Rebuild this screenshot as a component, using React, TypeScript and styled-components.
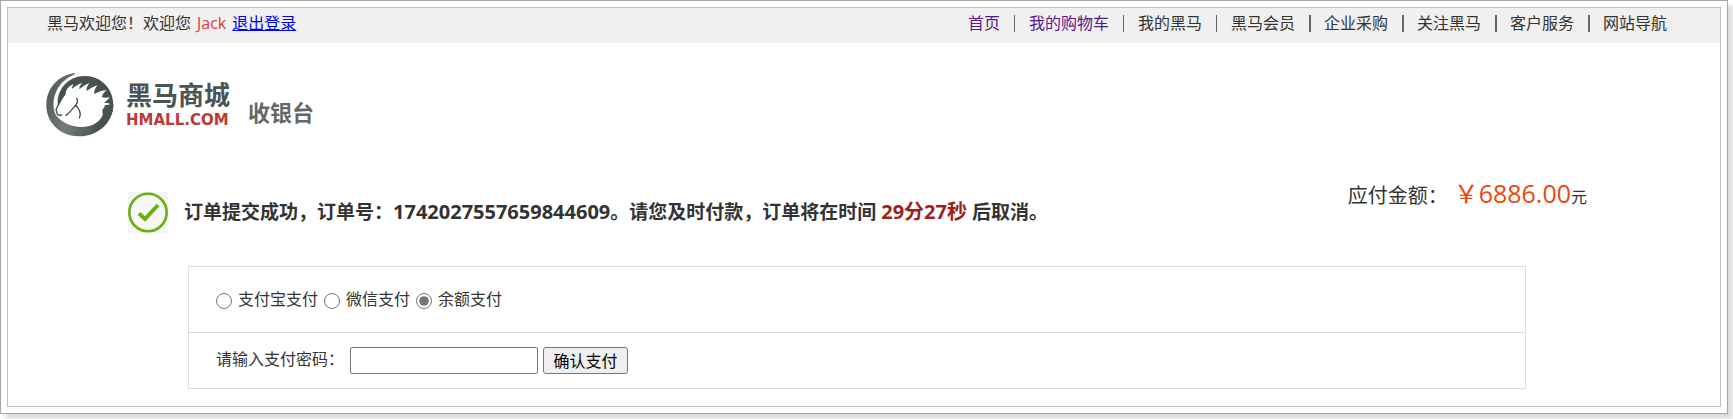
import React from "react";
import styled, { createGlobalStyle } from "styled-components";

const GlobalStyle = createGlobalStyle`
  *, *::before, *::after { box-sizing: border-box; }
  body {
    margin: 0;
    background: #fff;
    color: #333;
    font: 16px/24px "Open Sans", "Noto Sans CJK SC", sans-serif;
  }
`;

const Frame = styled.div`
  margin: 0 5px 5px 0;
  padding: 6px;
  border: 1px solid #a6a6a6;
  background: #fff;
  box-shadow: 5px 5px 4px #ddd;
`;

const Page = styled.div`
  border: 1px solid #bfbfbf;
  padding-bottom: 17px;
`;

const TopBar = styled.header`
  display: flex;
  justify-content: space-between;
  height: 35px;
  padding: 3px 53px 0 39px;
  background: #f0f0f0;
`;

const Greeting = styled.div`
  display: flex;
  gap: 6px;
  white-space: nowrap;
`;

const UserName = styled.span`
  color: #e4393c;
`;

const LogoutLink = styled.a`
  color: #00e;
`;

const NavList = styled.ul`
  display: flex;
  margin: 0;
  padding: 0;
  list-style: none;
`;

const NavItem = styled.li<{ $bar: number }>`
  display: flex;
  align-items: center;
  height: 24px;
  white-space: nowrap;

  &:not(:first-child)::before {
    content: "";
    width: ${(p) => p.$bar}px;
    height: 17px;
    margin: 0 ${(p) => 15 - p.$bar}px 0 14px;
    background: #666;
  }
`;

const NavLink = styled.a<{ $visited?: boolean }>`
  color: ${(p) => (p.$visited ? "#551a8b" : "#333")};
  text-decoration: none;
`;

const Brand = styled.div`
  display: flex;
  align-items: flex-start;
  padding: 29px 38px 0;
`;

const HorseMark = styled.svg`
  width: 68px;
  height: 65px;
`;

const BrandText = styled.div`
  display: flex;
  flex-direction: column;
  margin: 7px 0 0 12px;
`;

const BrandName = styled.span`
  color: #4b5452;
  font-size: 26px;
  font-weight: 700;
  line-height: 32px;
`;

const BrandDomain = styled.span`
  color: #bb3a36;
  font: 700 15px/18px "DejaVu Sans", sans-serif;
`;

const PageTitle = styled.h1`
  margin: 24px 0 0 18px;
  color: #666;
  font-size: 22px;
  line-height: 32px;
`;

const OrderRow = styled.section`
  display: flex;
  justify-content: space-between;
  padding: 38px 133px 0 120px;
`;

const OrderStatus = styled.div`
  display: flex;
  align-items: center;
  gap: 16px;
  margin-top: 17px;
`;

const CheckIcon = styled.svg`
  width: 40px;
  height: 41px;
  background: #f5f5f5;
`;

const OrderText = styled.h2`
  margin: 0;
  padding-bottom: 2px;
  font-size: 19px;
  line-height: 28px;
`;

const OrderNumber = styled.span`
  font-size: 20px;
`;

const Countdown = styled.span`
  color: #9e1f1a;
  font-size: 20px;
`;

const Amount = styled.div`
  display: flex;
  align-items: baseline;
  align-self: flex-start;
  line-height: 36px;
`;

const AmountLabel = styled.span`
  margin-right: 6px;
  font-size: 20px;
`;

const Price = styled.span`
  color: #e9480f;
  font-size: 25px;
`;

const PayPanel = styled.form`
  margin: 33px 194px 0 180px;
  border: 1px solid #ddd;
`;

const Methods = styled.div`
  display: flex;
  align-items: center;
  gap: 6px;
  height: 65px;
  padding: 0 27px 2px;
`;

const Method = styled.label`
  display: flex;
  align-items: center;
  gap: 6px;
`;

const Radio = styled.input`
  width: 16px;
  height: 16px;
  margin: 4px 0 0;
  filter: grayscale(1);
  accent-color: #767676;
`;

const PasswordRow = styled.div`
  display: flex;
  align-items: center;
  gap: 5px;
  height: 56px;
  padding: 0 27px;
  border-top: 1px solid #ddd;
`;

const PasswordLabel = styled.label`
  width: 129px;
  padding-bottom: 4px;
`;

const PasswordInput = styled.input`
  width: 188px;
  height: 27px;
  border: 1px solid #767676;
  border-radius: 2px;
`;

const PayButton = styled.button`
  width: 85px;
  height: 27px;
  padding: 0;
  border: 1px solid #767676;
  border-radius: 3px;
  background: #efefef;
  color: #000;
  font: inherit;
`;

const navItems = [
  { text: "首页", visited: true, bar: 1 },
  { text: "我的购物车", visited: true, bar: 1 },
  { text: "我的黑马", bar: 1 },
  { text: "黑马会员", bar: 1 },
  { text: "企业采购", bar: 2 },
  { text: "关注黑马", bar: 2 },
  { text: "客户服务", bar: 2 },
  { text: "网站导航", bar: 2 },
];

const methods = ["支付宝支付", "微信支付", "余额支付"];

function Horse() {
  return (
    <HorseMark viewBox="20 20 204 195" aria-hidden="true">
      <defs>
        <linearGradient id="ring" x1="0" y1="0" x2="1" y2="0.3">
          <stop offset="0" stopColor="#4c5554" />
          <stop offset="0.5" stopColor="#737b7c" />
          <stop offset="1" stopColor="#454d4c" />
        </linearGradient>
      </defs>
      <path
        fill="url(#ring)"
        d="M107 23C57 29 21 68 21 120C21 174 65 213 119 213C176 213 222 172 222 116L196 120C198 157 170 185 128 185C91 185 65 169 50 150C32 113 46 51 107 27Z"
      />
      <path
        fill="#465150"
        d="M55 112C55 78 79 34 135 32C183 31 222 68 222 119C222 145 208 170 187 184C193 164 190 147 189 135C193 125 202 120 214 117C207 113 201 112 194 112C200 107 206 104 211 96C202 98 195 98 187 95C191 86 195 80 202 75C188 75 178 80 165 86C163 79 167 70 174 60C161 64 151 71 142 77C140 69 145 60 151 53C138 57 129 64 120 72C119 65 123 59 129 52C116 57 107 63 98 70C97 66 100 62 103 57C85 63 80 74 78 88C70 97 61 112 55 122Z"
      />
      <path
        fill="none"
        stroke="#465150"
        strokeWidth="4"
        strokeLinecap="round"
        strokeLinejoin="round"
        d="M77 85Q70 94 62 110L50 132L54 147L62 151L67 148M80 150Q88 145 95 136L112 116Q117 106 112 99M109 119C121 132 127 144 120 158"
      />
    </HorseMark>
  );
}

export default function App() {
  return (
    <>
      <GlobalStyle />
      <Frame>
        <Page>
          <TopBar>
            <Greeting>
              <span>黑马欢迎您！欢迎您</span>
              <UserName>Jack</UserName>
              <LogoutLink href="#logout">退出登录</LogoutLink>
            </Greeting>
            <nav>
              <NavList>
                {navItems.map((item) => (
                  <NavItem key={item.text} $bar={item.bar}>
                    <NavLink href="#nav" $visited={item.visited}>
                      {item.text}
                    </NavLink>
                  </NavItem>
                ))}
              </NavList>
            </nav>
          </TopBar>
          <Brand>
            <Horse />
            <BrandText>
              <BrandName>黑马商城</BrandName>
              <BrandDomain>HMALL.COM</BrandDomain>
            </BrandText>
            <PageTitle>收银台</PageTitle>
          </Brand>
          <OrderRow>
            <OrderStatus>
              <CheckIcon viewBox="0 0 40 41" aria-hidden="true">
                <circle cx="20" cy="20.5" r="18.7" fill="#f7f7f7" stroke="#6bb012" strokeWidth="2.6" />
                <path d="M11 21.5L17 27L30 13" fill="none" stroke="#6bb012" strokeWidth="4" />
              </CheckIcon>
              <OrderText>
                订单提交成功，订单号：<OrderNumber>1742027557659844609</OrderNumber>
                。请您及时付款，订单将在时间 <Countdown>29分27秒</Countdown> 后取消。
              </OrderText>
            </OrderStatus>
            <Amount>
              <AmountLabel>应付金额：</AmountLabel>
              <Price>￥6886.00</Price>
              <span>元</span>
            </Amount>
          </OrderRow>
          <PayPanel onSubmit={(e) => e.preventDefault()}>
            <Methods>
              {methods.map((name) => (
                <Method key={name}>
                  <Radio type="radio" name="method" defaultChecked={name === "余额支付"} />
                  {name}
                </Method>
              ))}
            </Methods>
            <PasswordRow>
              <PasswordLabel htmlFor="password">请输入支付密码：</PasswordLabel>
              <PasswordInput id="password" type="password" />
              <PayButton type="submit">确认支付</PayButton>
            </PasswordRow>
          </PayPanel>
        </Page>
      </Frame>
    </>
  );
}
